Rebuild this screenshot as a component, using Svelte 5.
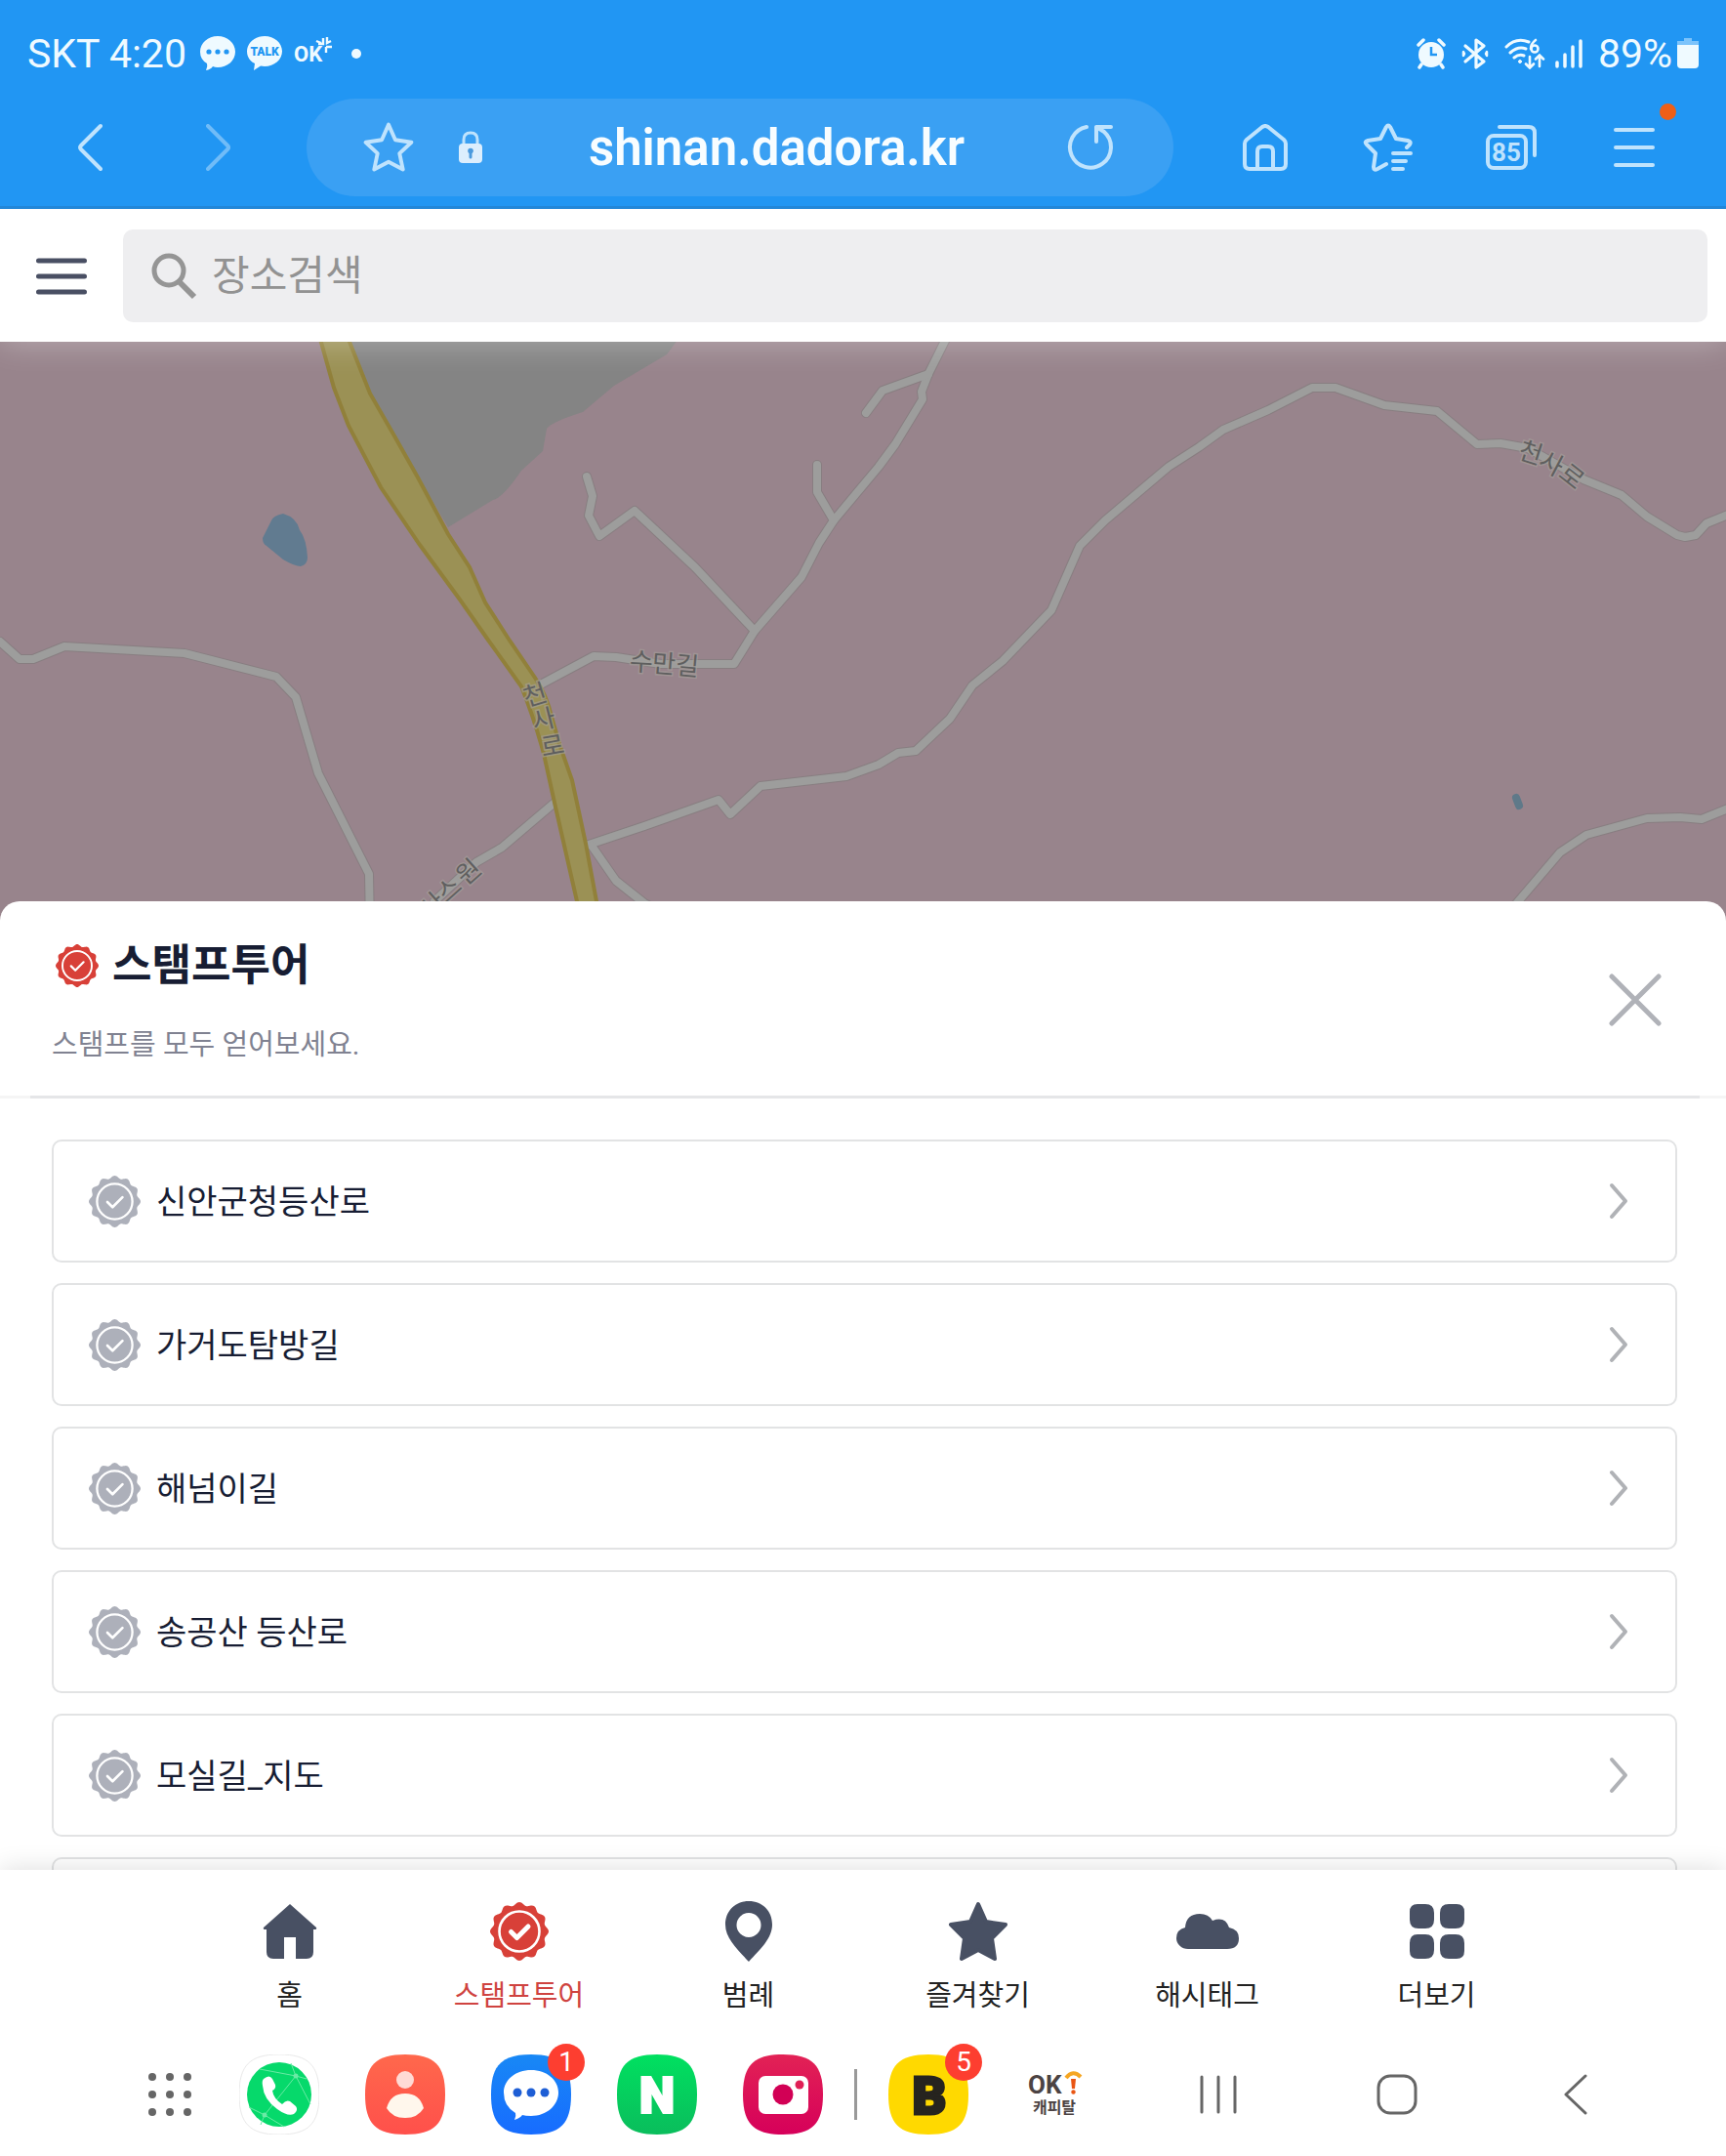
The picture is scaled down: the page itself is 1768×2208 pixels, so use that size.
<script>
    const tours = ['신안군청등산로', '가거도탐방길', '해넘이길', '송공산 등산로', '모실길_지도'];

    const menu = [
        { id: 'home', label: '홈' },
        { id: 'stamp', label: '스탬프투어' },
        { id: 'legend', label: '범례' },
        { id: 'favorite', label: '즐겨찾기' },
        { id: 'hashtag', label: '해시태그' },
        { id: 'more', label: '더보기' }
    ];

    let active = $state('stamp');
    let keyword = $state('');

    const roads = [
        '0,657 20,675 34,675 66,662 189,669 283,693 303,714 326,792 378,895 379,950',
        '550,703 608,672 631,673 677,680 752,680 773,646 821,591 839,556 854,533 900,478 917,455 945,409 944,401 951,383 970,345',
        '951,383 904,400 887,423',
        '773,646 712,581 650,523 614,549 603,528 607,508 601,488',
        '854,533 837,504 837,476',
        '600,866 660,846 736,819 748,834 779,805 867,795 900,783 920,771 938,769 973,736 996,702 1027,677 1077,625 1106,559 1132,533 1197,478 1228,458 1253,440 1299,420 1344,397 1368,397 1418,415 1472,421 1513,455 1537,454 1565,459 1622,491 1661,507 1687,529 1718,548 1726,550 1737,548 1748,536 1775,525',
        '606,866 631,902 660,925 690,940',
        '568,822 514,868 488,883 445,923',
        '1545,935 1598,873 1625,855 1687,838 1721,837 1743,839 1775,826'
    ];

    // char, x, y, angle
    const mapLabels = [
        ['천', 548, 712, -17], ['사', 557, 737, -14], ['로', 566, 764, -10],
        ['수', 657, 678, 3], ['만', 680, 680, 4], ['길', 704, 682, 5],
        ['천', 1568, 464, 18], ['사', 1589, 475, 28], ['로', 1610, 488, 38],
        ['원', 480, 893, -42], ['스', 460, 911, -42], ['사', 443, 927, -42]
    ];

    function scallop(n) {
        let d = '';
        for (let i = 0; i < 180; i++) {
            const a = (i / 180) * Math.PI * 2;
            const r = 28.4 + 1.6 * Math.cos(a * n);
            d += (i ? 'L' : 'M') + (30 + r * Math.sin(a)).toFixed(2) + ' ' + (30 - r * Math.cos(a)).toFixed(2);
        }
        return d + 'Z';
    }
    const seal = scallop(12);
    const squircle = 'M41 0C71 0 82 11 82 41S71 82 41 82 0 71 0 41 11 0 41 0Z';
    const starPath = 'M30 3L38 21L57 24L43 37L47 56L30 47L13 56L17 37L3 24L22 21Z';
</script>

{#snippet badge(weight)}
    <path d={seal} fill="currentColor" />
    <circle cx="30" cy="30" r="20.5" fill="none" stroke="#fff" stroke-width="2.6" />
    <path d="M21.5 30.5L27.5 36.5L39 25" fill="none" stroke="#fff" stroke-width={weight} stroke-linecap="round" stroke-linejoin="round" />
{/snippet}

<div class="app">
    <header>
        <div class="status">
            <div class="status-side">
                <span class="clock">SKT 4:20</span>
                <svg width="36" height="36" viewBox="0 0 36 36" fill="#effaff">
                    <path d="M18 0C28 0 36 7 36 16S28 32 18 32Q15 32 13 31Q11 34 6 35Q8 31 7 28Q0 24 0 16C0 7 8 0 18 0Z" />
                    <g fill="#2196f3"><circle cx="9" cy="16" r="2.6" /><circle cx="18" cy="16" r="2.6" /><circle cx="27" cy="16" r="2.6" /></g>
                </svg>
                <svg width="38" height="36" viewBox="0 0 38 36" fill="#effaff">
                    <path d="M19 0C29 0 37 7 37 15.500S29 31 19 31L15 30.500L8 35L9 28Q1 24 1 15.500C1 7 9 0 19 0Z" />
                    <text x="19" y="20" text-anchor="middle" font-size="12" font-weight="900" fill="#2196f3">TALK</text>
                </svg>
                <svg width="40" height="36" viewBox="0 0 40 36" fill="#effaff">
                    <text x="0" y="26" font-size="22" font-weight="700">OK</text>
                    <path d="M23 5L28 7M30 2V8H25M34 1V7L38 5M33 11H39M33 11V17" fill="none" stroke="#effaff" stroke-width="2.400" />
                </svg>
                <span class="dot"></span>
            </div>
            <div class="status-side right">
                <svg width="30" height="32" viewBox="0 0 30 32" fill="#effaff">
                    <circle cx="15" cy="17" r="13" />
                    <path d="M2 7L7 2M28 7L23 2M5 27L3 30M25 27L27 30" stroke="#effaff" stroke-width="3.500" stroke-linecap="round" />
                    <path d="M15 9V17H21" fill="none" stroke="#2196f3" stroke-width="2.500" />
                </svg>
                <svg width="30" height="34" viewBox="0 0 30 34" fill="none" stroke="#effaff" stroke-width="3.200" stroke-linejoin="round" stroke-linecap="round">
                    <path d="M5 9L24 25L16 31V3L24 9L5 25" />
                    <path d="M3 15V19L4 17ZM27 15V19L26 17Z" stroke-width="2.500" />
                </svg>
                <svg width="42" height="32" viewBox="0 0 42 32" fill="none" stroke="#effaff" stroke-width="3" stroke-linecap="round">
                    <path d="M2 9Q12 -1 25 4M6 15Q14 8 22 11M10 20Q15 16 20 18" />
                    <circle cx="16" cy="24" r="1.500" fill="#effaff" stroke-width="1" />
                    <path d="M26 19V30M22 26.500L26 30.500L30 26.500M36 29V18M32 21.500L36 17.500L40 21.500" stroke-width="2.600" />
                    <path d="M32 2Q27 6 27 11" stroke-width="2.600" /><circle cx="31" cy="11" r="3.500" stroke-width="2.600" />
                </svg>
                <svg class="signal" width="30" height="32" viewBox="0 0 30 32" stroke="#effaff" stroke-width="3.500" stroke-linecap="round">
                    <path d="M3 25V29M11 17V29M19 9V29M27 3V29" />
                </svg>
                <span class="clock">89%</span>
                <svg class="battery" width="22" height="32" viewBox="0 0 22 32">
                    <path d="M7 0H15V3H22V8H0V3H7Z" fill="#7cc3fb" />
                    <path d="M0 7H22V27Q22 31 18 31H4Q0 31 0 27Z" fill="#effaff" />
                </svg>
            </div>
        </div>

        <div class="toolbar">
            <button class="tool nav" aria-label="뒤로">
                <svg width="26" height="50" viewBox="0 0 26 50"><path d="M24 3L4 23Q2 25 4 27L24 47" /></svg>
            </button>
            <button class="tool nav faded" aria-label="앞으로">
                <svg width="26" height="50" viewBox="0 0 26 50"><path d="M2 3L22 23Q24 25 22 27L2 47" /></svg>
            </button>
            <div class="address">
                <button class="plain" aria-label="북마크">
                    <svg width="52" height="52" viewBox="0 0 60 60"><path d={starPath} stroke-width="4.500" /></svg>
                </button>
                <svg class="lock" width="32" height="36" viewBox="0 0 32 36">
                    <path d="M9 16V10Q9 3 16 3T23 10V16" stroke-width="3" />
                    <rect x="4" y="14" width="24" height="20" rx="4" fill="#dceefd" stroke="none" />
                    <circle cx="16" cy="21.500" r="2.800" fill="#4a9ade" stroke="none" /><path d="M16 22V28" stroke="#4a9ade" stroke-width="3" />
                </svg>
                <span class="url">shinan.dadora.kr</span>
                <button class="plain" aria-label="새로고침">
                    <svg width="48" height="48" viewBox="0 0 48 48"><path d="M20 3A21 21 0 1 0 38 8L30 3H45M30 3V18" /></svg>
                </button>
            </div>
            <div class="tools">
                <button class="tool" aria-label="홈페이지">
                    <svg width="48" height="48" viewBox="0 0 48 48"><path d="M3 20Q3 18 5 16L21 3Q24 1 27 3L43 16Q45 18 45 20V41Q45 46 40 46H8Q3 46 3 41ZM16 46V28Q16 23 21 23H27Q32 23 32 28V46" /></svg>
                </button>
                <button class="tool" aria-label="북마크 목록">
                    <svg width="52" height="50" viewBox="0 0 52 50"><path d="M45 25L48 22Q50 19 46 18L34 16L28 4Q26 1 24 4L18 16L5 18Q1 19 4 22L13 31L11 45Q11 49 15 47L24 42M31 31H49M31 39H44M31 47H41" /></svg>
                </button>
                <button class="tool" aria-label="탭">
                    <svg width="54" height="48" viewBox="0 0 54 48">
                        <path d="M15 3H45Q51 3 51 9V32" />
                        <rect x="3" y="12" width="39" height="33" rx="6" />
                        <text x="22" y="38" text-anchor="middle" font-size="26" font-weight="700">85</text>
                    </svg>
                </button>
                <button class="tool" aria-label="메뉴">
                    <svg width="42" height="42" viewBox="0 0 42 42"><path d="M2 3H40M2 21H40M2 39H40" /></svg>
                    <span class="alert"></span>
                </button>
            </div>
        </div>
    </header>

    <div class="search">
        <button class="plain" aria-label="전체 메뉴">
            <svg width="52" height="38" viewBox="0 0 52 38"><path d="M2.500 3H49.500M2.500 19H49.500M2.500 35H49.500" stroke="#494f63" stroke-width="5" stroke-linecap="round" /></svg>
        </button>
        <label class="search-box">
            <svg width="48" height="48" viewBox="0 0 48 48" fill="none" stroke="#959595" stroke-width="5"><circle cx="19" cy="18" r="15" /><path d="M29 29L45 45" stroke-width="6" /></svg>
            <input type="text" placeholder="장소검색" aria-label="장소검색" bind:value={keyword} />
        </label>
    </div>

    <svg class="map" viewBox="0 350 1768 597" preserveAspectRatio="xMidYMid slice" role="img" aria-label="지도">
        <rect x="0" y="350" width="1768" height="597" fill="#98848c" />
        <path d="M340 340H700L683 363L629 395L597 422Q565 432 560 439L556 462L534 482Q515 510 505 512L459 540Z" fill="#848484" />
        <path d="M290 526Q280 528 278 533L269 551Q269 557 273 559L290 573Q302 580 308 580Q315 578 315 571Q314 552 307 543Q304 530 290 526Z" fill="#617b90" />
        <g fill="none" stroke-linejoin="round" stroke-linecap="round">
            {#each roads as points}
                <polyline {points} stroke="#887e81" stroke-width="10" />
            {/each}
            {#each roads as points}
                <polyline {points} stroke="#9d9d9c" stroke-width="8" />
            {/each}
            <path d="M1553 817L1556 825" stroke="#5f7989" stroke-width="8" />
        </g>
        <path d="M326 340L342 397L357 436L390 499L430 558L471 614L499 654L534 703Q547 735 557 772L568 822L591 923L600 965H620L611 923L600 864L586 799L574 765L565 734Q560 712 548 694L522 656L497 617L481 581L459 547L428 489L402 443L379 403L354 340Z" fill="#9b9155" stroke="#91803a" stroke-width="4" />
        <g class="map-text">
            {#each mapLabels as [char, x, y, angle]}
                <text {x} {y} transform="rotate({angle} {x} {y})">{char}</text>
            {/each}
        </g>
    </svg>

    <main>
        <div class="sheet-head">
            <div>
                <h1>
                    <svg width="44" height="44" viewBox="0 0 60 60">{@render badge(3)}</svg>
                    스탬프투어
                </h1>
                <p>스탬프를 모두 얻어보세요.</p>
            </div>
            <button class="plain" aria-label="닫기">
                <svg width="54" height="54" viewBox="0 0 54 54"><path d="M3 3L51 51M51 3L3 51" stroke="#b0b2b8" stroke-width="5" stroke-linecap="round" /></svg>
            </button>
        </div>
        <ul>
            {#each tours as tour}
                <li>
                    <a class="card" href="#tour">
                        <svg class="gray" width="53" height="53" viewBox="0 0 60 60">{@render badge(3)}</svg>
                        <span>{tour}</span>
                        <svg width="20" height="38" viewBox="0 0 20 38" fill="none"><path d="M3 3L17 19L3 35" stroke="#b0b2b6" stroke-width="4" stroke-linecap="round" stroke-linejoin="round" /></svg>
                    </a>
                </li>
            {/each}
            <li><div class="card"></div></li>
        </ul>
    </main>

    <nav>
        {#each menu as item}
            <button class:active={active === item.id} onclick={() => (active = item.id)}>
                <svg width="64" height="64" viewBox="0 0 64 64" fill="currentColor">
                    {#if item.id === 'home'}
                        <path d="M32 4L59 28Q60 30 57 30H56V53Q56 60 49 60H38V38H26V60H15Q8 60 8 53V30H7Q4 30 5 28Z" />
                    {:else if item.id === 'stamp'}
                        <g transform="translate(2 2)">{@render badge(5)}</g>
                    {:else if item.id === 'legend'}
                        <path fill-rule="evenodd" d="M32 1C18 1 8 11 8 25C8 39 20 50 32 63C44 50 56 39 56 25C56 11 46 1 32 1ZM32 13A12 12 0 1 1 32 38A12 12 0 1 1 32 13Z" />
                    {:else if item.id === 'favorite'}
                        <path d="M32 4L40 22L60 25L46 39L49 60L32 51L15 60L18 39L4 25L24 22Z" stroke="currentColor" stroke-width="4" stroke-linejoin="round" />
                    {:else if item.id === 'hashtag'}
                        <path d="M12 50A12 11 0 0 1 0 39Q0 30 9 28Q10 14 24 14Q33 14 37 21Q50 16 54 28Q64 30 64 39Q64 50 52 50Z" />
                    {:else}
                        <path d="M12 4H20Q29 4 29 13V20Q29 29 20 29H13Q4 29 4 20V12Q4 4 12 4ZM44 4H52Q60 4 60 12V20Q60 29 51 29H44Q35 29 35 20V13Q35 4 44 4ZM12 35H20Q29 35 29 44V51Q29 60 20 60H12Q4 60 4 52V44Q4 35 12 35ZM44 35H51Q60 35 60 44V52Q60 60 52 60H44Q35 60 35 51V44Q35 35 44 35Z" />
                    {/if}
                </svg>
                {item.label}
            </button>
        {/each}
    </nav>

    <footer>
        <div class="apps">
            <button class="plain" aria-label="모든 앱">
                <svg width="48" height="48" viewBox="0 0 48 48" fill="#666">
                    {#each [6, 24, 42] as cx}
                        {#each [6, 24, 42] as cy}
                            <circle {cx} {cy} r="4" />
                        {/each}
                    {/each}
                </svg>
            </button>
            <button class="plain" aria-label="전화">
                <svg width="82" height="82" viewBox="0 0 82 82">
                    <path d={squircle} fill="#fff" stroke="#e9e9e9" />
                    <circle cx="41" cy="41" r="33" fill="#06d96b" />
                    <path d="M21 15L58 22L69 25M53 9L58 22L73 51M58 22L26 62L10 54M26 62L46 74M26 62L22 72" stroke="#6aeaa5" fill="none" />
                    <circle cx="58" cy="22" r="2.500" fill="#6aeaa5" /><circle cx="26" cy="62" r="2.500" fill="#6aeaa5" />
                    <path d="M25 25Q31 20 34 25L37 31Q38 35 34 37Q35 45 44 51Q48 46 52 48L58 53Q61 57 56 61Q50 64 39 56Q25 46 24 32Q23 27 25 25Z" fill="#fff" />
                </svg>
            </button>
            <button class="plain" aria-label="연락처">
                <svg width="82" height="82" viewBox="0 0 82 82">
                    <defs><linearGradient id="contact" x2="0" y2="1"><stop stop-color="#ff684c" /><stop offset="1" stop-color="#ff504b" /></linearGradient></defs>
                    <path d={squircle} fill="url(#contact)" />
                    <circle cx="41" cy="26" r="9" fill="#ffdad5" />
                    <path d="M22 55Q26 40 41 40T60 55Q54 65 41 65T22 55Z" fill="#fff7ec" />
                </svg>
            </button>
            <button class="plain" aria-label="메시지">
                <svg width="82" height="82" viewBox="0 0 82 82">
                    <defs><linearGradient id="message" x2="0" y2="1"><stop stop-color="#1888f5" /><stop offset="1" stop-color="#176cff" /></linearGradient></defs>
                    <path d={squircle} fill="url(#message)" />
                    <path d="M41 16C57 16 69 26 69 39S57 63 41 63Q35 63 32 62Q30 65 24 67Q26 63 25 60Q13 53 13 39C13 26 25 16 41 16Z" fill="#fff" />
                    <g fill="#1e5ed5"><circle cx="27" cy="39" r="4.500" /><circle cx="41" cy="39" r="4.500" /><circle cx="55" cy="39" r="4.500" /></g>
                </svg>
                <span class="count">1</span>
            </button>
            <button class="plain" aria-label="네이버">
                <svg width="82" height="82" viewBox="0 0 82 82">
                    <defs><linearGradient id="naver" x2="0" y2="1"><stop stop-color="#00e060" /><stop offset="1" stop-color="#0abd5c" /></linearGradient></defs>
                    <path d={squircle} fill="url(#naver)" />
                    <text x="41" y="60" text-anchor="middle" font-size="52" font-weight="900" fill="#fff" stroke="#fff" stroke-width="2">N</text>
                </svg>
            </button>
            <button class="plain" aria-label="카메라">
                <svg width="82" height="82" viewBox="0 0 82 82">
                    <defs><linearGradient id="camera" x2="0" y2="1"><stop stop-color="#e22255" /><stop offset="1" stop-color="#d6005a" /></linearGradient></defs>
                    <path d={squircle} fill="url(#camera)" />
                    <rect x="16" y="22" width="51" height="39" rx="7" fill="#fff" />
                    <circle cx="41" cy="41" r="10.500" fill="#d20055" /><circle cx="58" cy="31" r="4.500" fill="#e02056" />
                </svg>
            </button>
            <span class="divider"></span>
            <button class="plain" aria-label="KB">
                <svg width="82" height="82" viewBox="0 0 82 82">
                    <path d={squircle} fill="#ffd900" />
                    <text x="42" y="61" text-anchor="middle" font-size="54" font-weight="900" fill="#26241f" stroke="#26241f" stroke-width="3">B</text>
                </svg>
                <span class="count">5</span>
            </button>
            <button class="plain" aria-label="OK캐피탈">
                <svg width="82" height="82" viewBox="0 0 82 82" fill="#4c4343">
                    <text x="14" y="40" font-size="26" font-weight="700">OK</text>
                    <path d="M53 24Q60 15 68 23" fill="none" stroke="#f5a623" stroke-width="4" />
                    <path d="M58 25H63L62 35H59Z" fill="#e95513" /><circle cx="60.500" cy="38.500" r="2.200" fill="#e95513" />
                    <text x="41" y="60" text-anchor="middle" font-size="16" font-weight="700">캐피탈</text>
                </svg>
            </button>
        </div>
        <div class="system">
            <button aria-label="최근 앱"><svg width="40" height="42" viewBox="0 0 40 42"><path d="M3 3V39M20 3V39M37 3V39" /></svg></button>
            <button aria-label="홈 버튼"><svg width="42" height="42" viewBox="0 0 42 42"><rect x="2" y="2" width="38" height="38" rx="12" /></svg></button>
            <button aria-label="뒤로 가기"><svg width="26" height="42" viewBox="0 0 26 42"><path d="M23 2L3 21L23 40" /></svg></button>
        </div>
    </footer>
</div>

<style>
    :global(body) {
        margin: 0;
    }

    .app {
        display: flex;
        flex-direction: column;
        height: 100vh;
        overflow: hidden;
        background: #fff;
        color: #171d33;
        font-family: Roboto, "Noto Sans CJK KR", sans-serif;
    }

    svg {
        display: block;
        flex: none;
    }

    button {
        padding: 0;
        border: 0;
        background: none;
        color: inherit;
        font: inherit;
        cursor: pointer;
    }

    .plain {
        position: relative;
        flex: none;
    }

    header {
        position: relative;
        z-index: 2;
        flex: none;
        background: #2196f3;
        border-bottom: 3px solid #2287d8;
        color: #effaff;
    }

    .status {
        display: flex;
        justify-content: space-between;
        align-items: center;
        box-sizing: border-box;
        height: 101px;
        padding: 8px 28px 0;
    }

    .status-side {
        display: flex;
        align-items: center;
        gap: 11px;
    }

    .status-side.right {
        gap: 15px;
    }

    .clock {
        margin-right: 3px;
        font-size: 41px;
        line-height: 48px;
    }

    .signal {
        margin-left: -6px;
    }

    .battery {
        margin-left: -13px;
    }

    .dot {
        width: 10px;
        height: 10px;
        margin-left: 8px;
        border-radius: 50%;
        background: #effaff;
    }

    .toolbar {
        display: flex;
        align-items: center;
        padding: 0 31px 10px 26px;
    }

    .toolbar svg {
        fill: none;
        stroke: #bfe3fd;
        stroke-width: 4px;
        stroke-linecap: round;
        stroke-linejoin: round;
    }

    .toolbar text {
        fill: #bfe3fd;
        stroke: none;
    }

    .tool {
        position: relative;
        display: grid;
        place-items: center;
        width: 126px;
        height: 100px;
    }

    .tool.nav {
        width: 132px;
    }

    .faded {
        opacity: .5;
    }

    .tools {
        display: flex;
        margin-left: 31px;
    }

    .alert {
        position: absolute;
        top: 5px;
        right: 20px;
        width: 17px;
        height: 17px;
        border-radius: 50%;
        background: #ee5f17;
    }

    .address {
        flex: 1;
        display: flex;
        align-items: center;
        height: 100px;
        margin-left: 24px;
        padding: 0 61px 0 58px;
        border-radius: 50px;
        background: #3aa0f3;
    }

    .lock {
        margin-left: 42px;
    }

    .url {
        flex: 1;
        text-align: center;
        color: #f8fdff;
        font-size: 51px;
        font-weight: 600;
    }

    .search {
        position: relative;
        z-index: 1;
        flex: none;
        display: flex;
        align-items: center;
        gap: 37px;
        padding: 21px 19px 20px 37px;
        background: #fff;
        box-shadow: 0 0 32px rgba(255, 255, 255, .35);
    }

    .search-box {
        flex: 1;
        display: flex;
        align-items: center;
        gap: 15px;
        height: 95px;
        padding: 0 28px;
        border-radius: 10px;
        background: #eeeef0;
    }

    input {
        flex: 1;
        min-width: 0;
        padding: 0;
        border: 0;
        outline: 0;
        background: none;
        color: #333;
        font: inherit;
        font-size: 42px;
    }

    input::placeholder {
        color: #929292;
        opacity: 1;
    }

    .map {
        width: 100%;
        height: 597px;
    }

    .map-text {
        font-size: 26px;
        fill: #5f5f5f;
        stroke: rgba(165, 160, 155, .6);
        stroke-width: 3px;
        paint-order: stroke;
        text-anchor: middle;
        dominant-baseline: central;
    }

    main {
        position: relative;
        flex: 1;
        min-height: 0;
        margin-top: -24px;
        overflow: hidden;
        border-radius: 20px 20px 0 0;
        background: #fff;
    }

    .sheet-head {
        display: flex;
        justify-content: space-between;
        align-items: center;
        padding: 32px 66px 30px 53px;
        border-bottom: 3px solid;
        border-image: linear-gradient(90deg, #f5f5f5 32px, #e5e6e8 32px, #e5e6e8 calc(100% - 28px), #f5f5f5 calc(100% - 28px)) 1;
    }

    h1 {
        display: flex;
        align-items: center;
        gap: 14px;
        margin: 0 0 26px;
        padding-left: 4px;
        font-size: 44px;
        line-height: 68px;
    }

    h1 svg {
        color: #d84038;
    }

    p {
        margin: 0;
        color: #808291;
        font-size: 29px;
        line-height: 43px;
    }

    ul {
        display: flex;
        flex-direction: column;
        gap: 21px;
        margin: 0;
        padding: 42px 50px 0 53px;
        list-style: none;
    }

    .card {
        display: flex;
        align-items: center;
        gap: 16px;
        box-sizing: border-box;
        height: 126px;
        padding: 0 48px 0 36px;
        border: 2px solid #e2e3e4;
        border-radius: 10px;
        color: inherit;
        font-size: 34px;
        text-decoration: none;
    }

    .card span {
        flex: 1;
        padding-bottom: 4px;
    }

    .gray {
        color: #adb0ba;
    }

    nav {
        position: relative;
        flex: none;
        display: flex;
        justify-content: center;
        padding-top: 31px;
        background: #fff;
        box-shadow: 0 -2px 24px rgba(0, 0, 0, .12);
    }

    nav button {
        display: flex;
        flex-direction: column;
        align-items: center;
        gap: 13px;
        width: 235px;
        color: #222;
        font-size: 29px;
        line-height: 43px;
    }

    nav svg {
        color: #485063;
    }

    nav .active {
        color: #cf4340;
    }

    nav .active svg {
        color: #d84038;
    }

    footer {
        position: relative;
        flex: none;
        display: flex;
        justify-content: space-between;
        align-items: center;
        padding: 38px 63px 22px 150px;
        background: #fff;
    }

    .apps {
        display: flex;
        align-items: center;
        gap: 47px;
    }

    .divider {
        width: 3px;
        height: 52px;
        margin: 0 -15px;
        background: #999;
    }

    .count {
        position: absolute;
        top: -11px;
        right: -14px;
        width: 38px;
        height: 38px;
        border-radius: 50%;
        background: #fd3e30;
        color: #fff;
        font-size: 28px;
        line-height: 38px;
        text-align: center;
    }

    .system {
        display: flex;
    }

    .system button {
        display: grid;
        place-items: center;
        width: 183px;
        height: 82px;
    }

    .system svg {
        fill: none;
        stroke: #666;
        stroke-width: 3px;
        stroke-linecap: round;
        stroke-linejoin: round;
    }
</style>
